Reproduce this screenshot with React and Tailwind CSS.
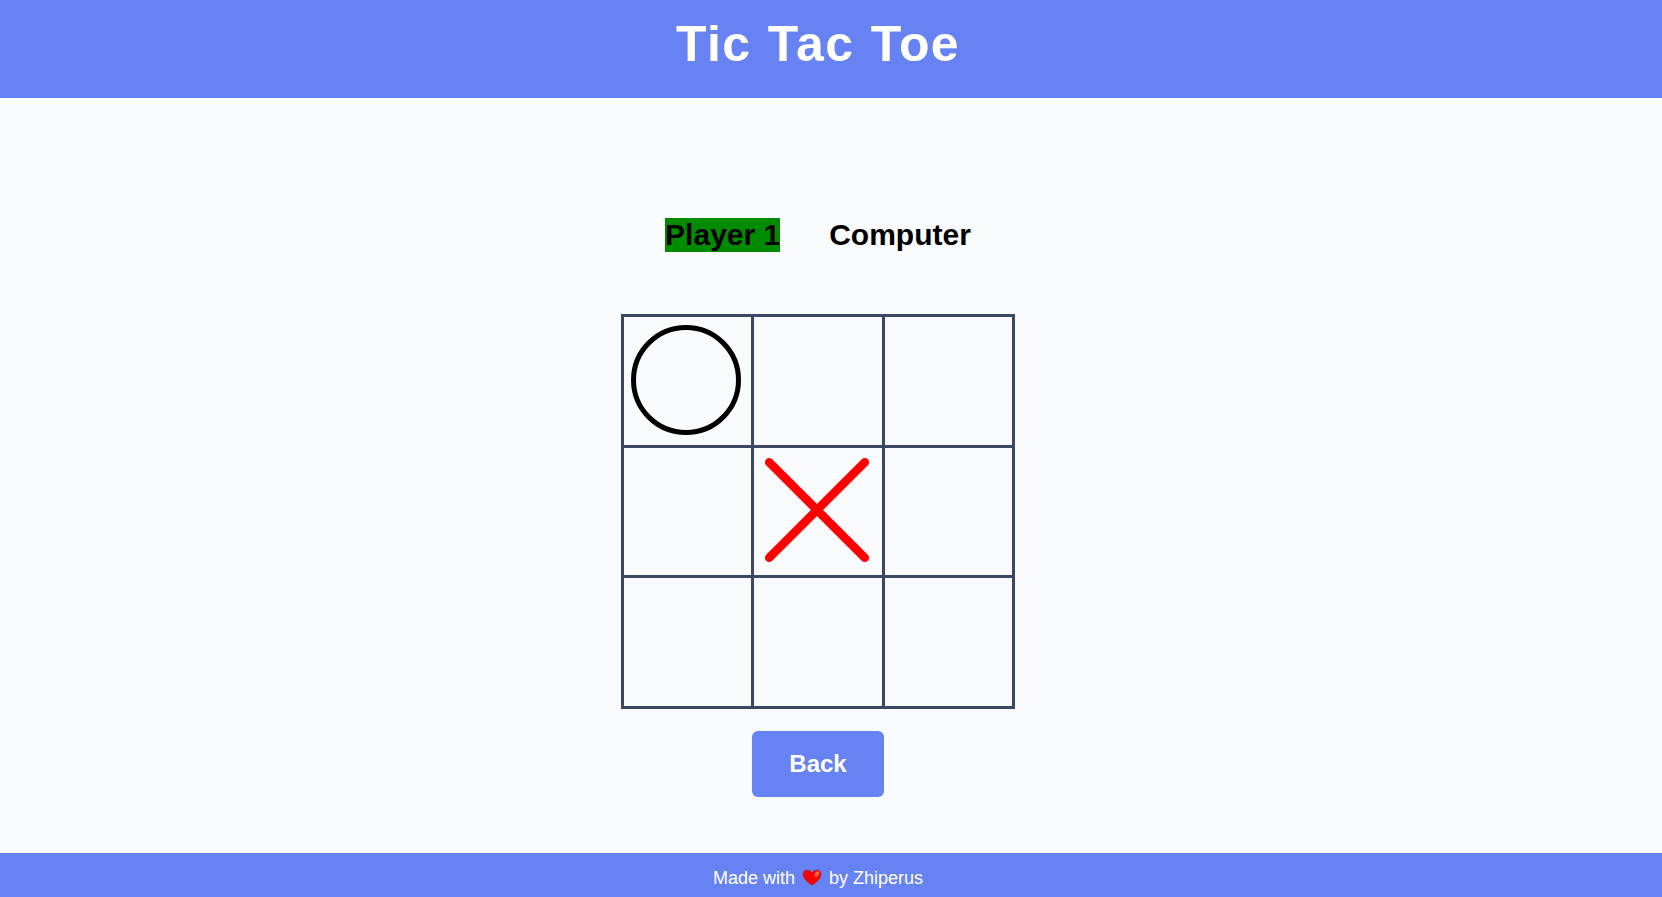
const cells = ['O', null, null, null, 'X', null, null, null, null];

function Circle() {
  return (
    <svg className="block h-[128px] w-[127px]" viewBox="0 0 127 128" fill="none">
      <circle cx="62" cy="63" r="52.5" stroke="#000" strokeWidth="5" />
    </svg>
  );
}

function Cross() {
  return (
    <svg className="block h-[127px] w-[128px]" viewBox="0 0 128 127" fill="none">
      <path d="M15.2 14.2 110.8 109.8M110.8 14.2 15.2 109.8" stroke="#f00" strokeWidth="8.6" strokeLinecap="round" />
    </svg>
  );
}

function Heart() {
  return (
    <svg className="mt-px h-[17px] w-[20px]" viewBox="0 0 20 17">
      <path
        d="M10 16.3C6.2 13.6 1 9.7 1 5.4 1 2.7 2.9 1 5.2 1 7.4 1 9 2.1 10 3.8 11 2.1 12.6 1 14.8 1 17.1 1 19 2.7 19 5.4 19 9.7 13.8 13.6 10 16.3Z"
        fill="#f90000"
        stroke="#a52a4c"
        strokeWidth="0.6"
      />
      <ellipse cx="14.8" cy="5.2" rx="2" ry="3" transform="rotate(30 14.8 5.2)" fill="#ff6a3c" />
    </svg>
  );
}

export default function App() {
  return (
    <div className="flex h-[897px] flex-col overflow-hidden bg-[#f9fafc] font-['Liberation_Sans',Arial,sans-serif]">
      <header className="flex h-[98px] justify-center bg-[#6782f2] pt-[16px] pr-[26px]">
        <h1 className="text-[50px] leading-[57px] font-bold tracking-[1.4px] text-white [word-spacing:1px]">
          Tic Tac Toe
        </h1>
      </header>

      <main className="flex flex-1 flex-col items-center pt-[120px] pr-[26px]">
        <div className="flex gap-[49px] text-[30px] leading-[34px] font-bold text-black">
          <p className="bg-[#008b00]">Player 1</p>
          <p>Computer</p>
        </div>

        <div className="mt-[62px] grid grid-cols-[127px_128px_127px] grid-rows-[128px_127px_128px] gap-[3px] border-3 border-[#3a4765] bg-[#3a4765]">
          {cells.map((mark, i) => (
            <div key={i} className="bg-[#f9fafc]">
              {mark === 'O' && <Circle />}
              {mark === 'X' && <Cross />}
            </div>
          ))}
        </div>

        <button className="mt-[22px] h-[66px] w-[132px] rounded-md bg-[#6782f2] text-2xl font-bold text-white">
          Back
        </button>
      </main>

      <footer className="flex h-[44px] justify-center bg-[#6782f2] pt-[15px] pr-[26px] text-[18px] leading-[21px] text-white">
        <span>Made with</span>
        <span className="mx-[7px]">
          <Heart />
        </span>
        <span>by Zhiperus</span>
      </footer>
    </div>
  );
}
